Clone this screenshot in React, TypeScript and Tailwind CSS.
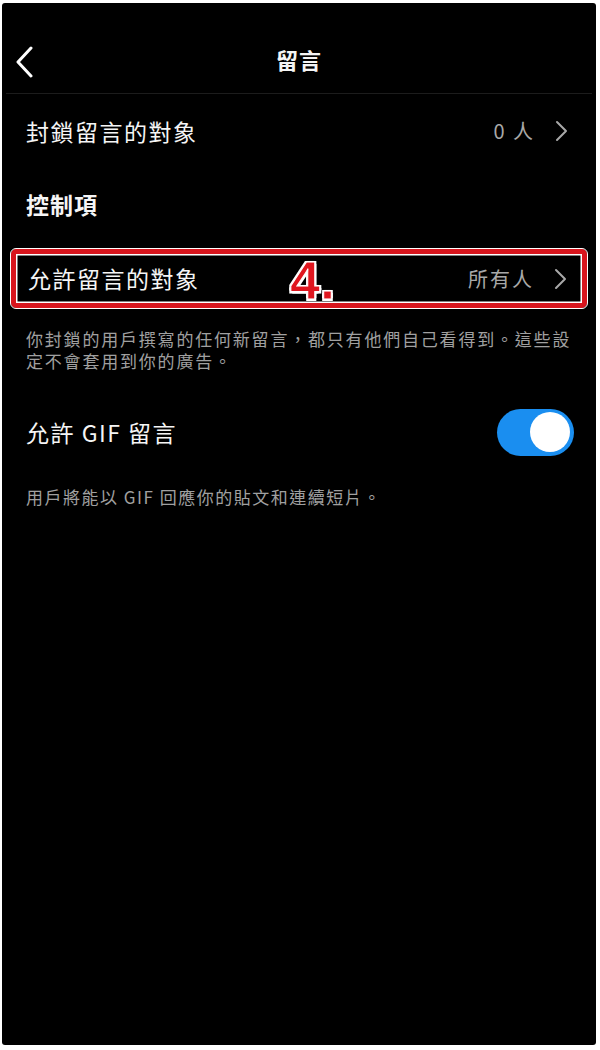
import { useState } from 'react'

const font = { fontFamily: '"Noto Sans CJK TC", "Noto Sans", sans-serif' }

function Chevron({ className = '' }: { className?: string }) {
  return (
    <svg width="14" height="22" viewBox="0 0 14 22" className={className} fill="none">
      <path d="M2 2l9 9-9 9" stroke="currentColor" strokeWidth="2" strokeLinecap="round" strokeLinejoin="round" />
    </svg>
  )
}

export default function App() {
  const [gif, setGif] = useState(true)

  return (
    <div className="w-[600px] h-[1050px] bg-white pt-[3px] pl-[2px] pr-[4px] pb-[5px]" style={font}>
      <div className="h-full bg-black rounded-[3px] text-[#f5f5f5] flex flex-col">
        {/* header */}
        <div className="relative h-[91px] flex items-center justify-center border-b border-[#1c1c1c] mx-[4px]">
          <button className="absolute left-[9px] top-[43px] text-white">
            <svg width="20" height="32" viewBox="0 0 20 32" fill="none">
              <path d="M16 2L3 16l13 14" stroke="currentColor" strokeWidth="3" strokeLinecap="round" strokeLinejoin="round" />
            </svg>
          </button>
          <div className="pt-[22px] text-[22px] font-bold tracking-[1px]">留言</div>
        </div>

        {/* blocked row */}
        <div className="flex items-center justify-between h-[74px] pl-[24px] pr-[27px]">
          <span className="text-[23px] tracking-[1.5px]">封鎖留言的對象</span>
          <div className="flex items-center gap-[20px] text-[#a8a8a8]">
            <span className="text-[20px] tracking-[2px]">0 人</span>
            <Chevron />
          </div>
        </div>

        <div className="h-[72px] pl-[24px] flex items-center">
          <span className="text-[23px] font-bold tracking-[1px]">控制項</span>
        </div>

        {/* highlighted row */}
        <div className="px-[9px] pt-[9px]">
          <div className="relative rounded-[5px] border-[5px] border-[#d8151d] outline outline-[1.5px] outline-white shadow-[inset_0_0_0_1.5px_white] h-[59px] flex items-center justify-between pl-[12px] pr-[14px]">
            <span className="text-[23px] tracking-[1.5px]">允許留言的對象</span>
            <div className="flex items-center gap-[20px] text-[#a8a8a8]">
              <span className="text-[20px] tracking-[2px]">所有人</span>
              <Chevron />
            </div>
            <span
              className="absolute left-[274px] top-[-1px] text-[54px] font-bold leading-none text-[#e0161f]"
              style={{ fontFamily: '"Liberation Sans", Arial, sans-serif', WebkitTextStroke: '1px white', textShadow: '0 0 2px #fff, 1.5px 1.5px 0 #fff, -1.5px -1.5px 0 #fff, 1.5px -1.5px 0 #fff, -1.5px 1.5px 0 #fff' }}
            >
              4.
            </span>
          </div>
        </div>

        <p className="pl-[24px] pr-[8px] pt-[20px] text-[17px] leading-[22px] tracking-[1.8px] text-[#a0a0a0]">
          你封鎖的用戶撰寫的任何新留言，都只有他們自己看得到。這些設定不會套用到你的廣告。
        </p>

        {/* gif toggle */}
        <div className="flex items-center justify-between pl-[24px] pr-[22px] mt-[30px] h-[60px]">
          <span className="text-[23px] tracking-[1.5px]">允許 GIF 留言</span>
          <button
            onClick={() => setGif(!gif)}
            className={`w-[77px] h-[47px] rounded-full flex items-center p-[4px] ${gif ? 'bg-[#1a8ef0] justify-end' : 'bg-[#3a3a3a] justify-start'}`}
          >
            <span className="w-[40px] h-[40px] rounded-full bg-white" />
          </button>
        </div>

        <p className="pl-[24px] pt-[22px] text-[17px] tracking-[1.5px] text-[#a0a0a0]">
          用戶將能以 GIF 回應你的貼文和連續短片。
        </p>
      </div>
    </div>
  )
}
